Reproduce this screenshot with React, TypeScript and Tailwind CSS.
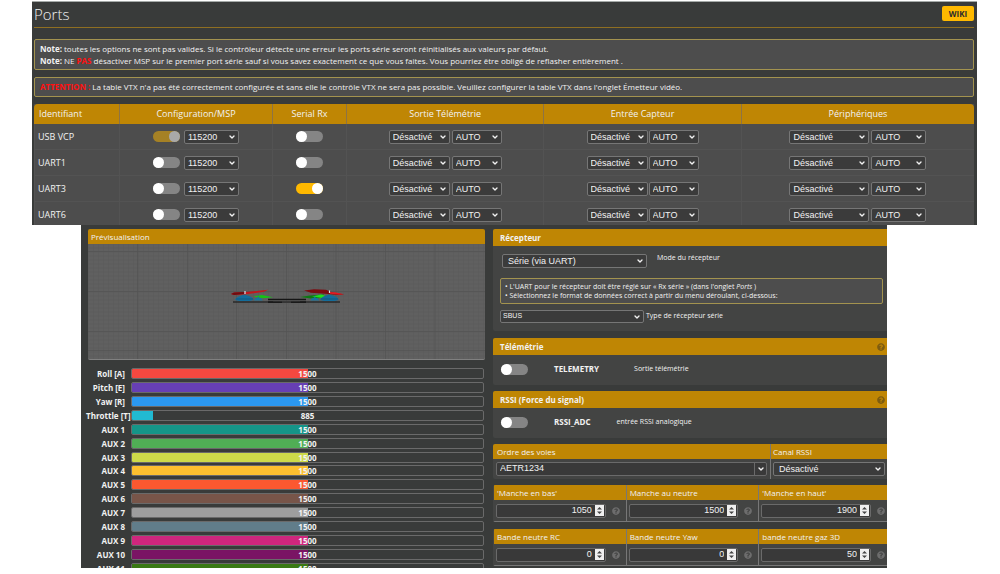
import type { ReactNode } from "react";
import { ChevronDown } from "lucide-react";
import { FaQuestionCircle } from "react-icons/fa";

interface SelectProps {
  label: string;
  options: string[];
  className: string;
}

function Select({ label, options, className }: SelectProps) {
  return (
    <span className="relative inline-flex items-center">
      <select
        aria-label={label}
        className={`appearance-none rounded-xs border border-[#767676] bg-[#3b3b3b] font-['Liberation_Sans',sans-serif] text-[9px] text-[#f2f2f2] outline-none ${className}`}
      >
        {options.map((o) => (
          <option key={o}>{o}</option>
        ))}
      </select>
      <ChevronDown className="pointer-events-none absolute right-[3px] size-2" strokeWidth={4} />
    </span>
  );
}

interface ToggleProps {
  label: string;
  id?: string;
  on?: boolean;
  disabled?: boolean;
}

function Toggle({ label, id, on, disabled }: ToggleProps) {
  return (
    <input
      type="checkbox"
      id={id}
      aria-label={label}
      defaultChecked={on}
      disabled={disabled}
      className="flex h-[11px] w-[27px] shrink-0 appearance-none rounded-full bg-[#858585] before:size-[11px] before:rounded-full before:bg-white checked:justify-end checked:bg-[#ffb900] disabled:bg-[#a58125] disabled:before:bg-[#a9a9a9]"
    />
  );
}

const ports = [
  { id: "USB VCP", msp: true, locked: true, rx: false },
  { id: "UART1", msp: false, locked: false, rx: false },
  { id: "UART3", msp: false, locked: false, rx: true },
  { id: "UART6", msp: false, locked: false, rx: false },
];

const columns = [
  { title: "Configuration/MSP", width: "w-[153px]" },
  { title: "Serial Rx", width: "w-[74px]" },
  { title: "Sortie Télémétrie", width: "w-[21%]" },
  { title: "Entrée Capteur", width: "w-[21%]" },
  { title: "Périphériques", width: "" },
];

function PortsTable() {
  return (
    <table className="w-full table-fixed border-separate border-spacing-0 bg-[#4d4d4d] text-[9px] leading-3">
      <thead>
        <tr className="h-5 bg-[#bf8604]">
          <th className="w-[85px] rounded-tl-sm pl-[5px] text-left font-normal">Identifiant</th>
          {columns.map((c) => (
            <th key={c.title} className={`border-l border-[#8d7345] font-normal last:rounded-tr-sm ${c.width}`}>
              {c.title}
            </th>
          ))}
        </tr>
      </thead>
      <tbody>
        {ports.map((p) => (
          <tr key={p.id} className="h-[26px] *:border-b *:border-l *:border-[#535353] *:p-0">
            <td>
              <span className="pl-[3px]">{p.id}</span>
            </td>
            <td>
              <div className="flex items-center justify-center gap-1">
                <Toggle label={`MSP ${p.id}`} on={p.msp} disabled={p.locked} />
                <Select label={`Vitesse ${p.id}`} options={["115200"]} className="h-3.5 w-[55px] pl-[3px]" />
              </div>
            </td>
            <td>
              <div className="flex justify-center">
                <Toggle label={`Serial Rx ${p.id}`} on={p.rx} />
              </div>
            </td>
            <td>
              <div className="flex justify-center gap-0.5">
                <Select label={`Télémétrie ${p.id}`} options={["Désactivé"]} className="h-3.5 w-[61px] pl-[3px]" />
                <Select label={`Vitesse télémétrie ${p.id}`} options={["AUTO"]} className="h-3.5 w-[50px] pl-[3px]" />
              </div>
            </td>
            <td>
              <div className="flex justify-center gap-px">
                <Select label={`Capteur ${p.id}`} options={["Désactivé"]} className="h-3.5 w-[61px] pl-[3px]" />
                <Select label={`Vitesse capteur ${p.id}`} options={["AUTO"]} className="h-3.5 w-[50px] pl-[3px]" />
              </div>
            </td>
            <td>
              <div className="flex justify-center gap-0.5">
                <Select label={`Périphérique ${p.id}`} options={["Désactivé"]} className="h-3.5 w-[80px] pl-[3px]" />
                <Select label={`Vitesse périphérique ${p.id}`} options={["AUTO"]} className="h-3.5 w-[55px] pl-[3px]" />
              </div>
            </td>
          </tr>
        ))}
      </tbody>
    </table>
  );
}

const channels = [
  { name: "Roll [A]", value: 1500, fill: 50, color: "bg-[#f44840]" },
  { name: "Pitch [E]", value: 1500, fill: 50, color: "bg-[#673fb4]" },
  { name: "Yaw [R]", value: 1500, fill: 50, color: "bg-[#2b98f0]" },
  { name: "Throttle [T]", value: 885, fill: 6, color: "bg-[#21bad2]" },
  { name: "AUX 1", value: 1500, fill: 50, color: "bg-[#159588]" },
  { name: "AUX 2", value: 1500, fill: 50, color: "bg-[#50ae55]" },
  { name: "AUX 3", value: 1500, fill: 50, color: "bg-[#cdda49]" },
  { name: "AUX 4", value: 1500, fill: 50, color: "bg-[#fdc02f]" },
  { name: "AUX 5", value: 1500, fill: 50, color: "bg-[#fc5830]" },
  { name: "AUX 6", value: 1500, fill: 50, color: "bg-[#785549]" },
  { name: "AUX 7", value: 1500, fill: 50, color: "bg-[#9e9e9e]" },
  { name: "AUX 8", value: 1500, fill: 50, color: "bg-[#617d8a]" },
  { name: "AUX 9", value: 1500, fill: 50, color: "bg-[#cf267d]" },
  { name: "AUX 10", value: 1500, fill: 50, color: "bg-[#7a1464]" },
  { name: "AUX 11", value: 1500, fill: 50, color: "bg-[#3a7a14]" },
];

function ChannelBars() {
  return (
    <div className="mt-[7px] -ml-0.5 grid h-52 shrink-0 auto-rows-fr pr-px text-[8px] leading-[11px] font-bold">
      {channels.map((c) => (
        <div key={c.name} className="flex items-center gap-1.5">
          <span className="w-[39px] shrink-0 text-right whitespace-nowrap">{c.name}</span>
          <div className="grid h-[11px] flex-1 overflow-hidden rounded-xs border border-[#6a6a6a]">
            <div className={`col-start-1 row-start-1 ${c.color}`} style={{ width: `${c.fill}%` }} />
            <span className="col-start-1 row-start-1 text-center leading-[9px]">{c.value}</span>
          </div>
        </div>
      ))}
    </div>
  );
}

function ModelPreview() {
  return (
    <svg viewBox="0 0 397 116" preserveAspectRatio="xMidYMid slice" className="h-[116px] w-full rounded-b-xs border-b border-[#808080] bg-[#606060]">
      <defs>
        <pattern id="minor" width="5" height="4" patternUnits="userSpaceOnUse">
          <path d="M0 .5H5M.5 0V4" stroke="#5b5b5b" strokeWidth=".6" />
        </pattern>
      </defs>
      <rect width="397" height="116" fill="url(#minor)" />
      <path d="M49.5 0v116M99.5 0v116M148.500 0v116M198.500 0v116M248 0v116M297.500 0v116M347 0v116M0 8h397M0 48h397M0 88h397M0 107h397" stroke="#535353" strokeWidth=".7" />
      <path d="M145 58.500h40M212 58.500h40" stroke="#2a2a2a" strokeWidth="1.400" />
      <path d="M180 56h38" stroke="#151515" strokeWidth="1.500" />
      <path d="M180 58.600h38" stroke="#1a1a1a" strokeWidth="1.600" />
      <path d="M194 58.600h9" stroke="#555" strokeWidth=".8" />
      <path d="M165 53l9-1.500 11 2.200-10 1.100z" fill="#16c216" />
      <path d="M212 53.500l10-1.500 14-1-3 3.500-10 .5z" fill="#0d7a12" />
      <path d="M224 53l9-2 4 1-3 2.500z" fill="#1fe01f" />
      <path d="M166 57l1-2 2.500-.8.800-2 .8 2 2.500.8 1 2z" fill="#17759b" />
      <path d="M222.500 57l1-2 2.500-.8.800-2 .8 2 2.500.8 1 2z" fill="#17759b" />
      <path d="M147 56.500q1-3 5-4l4-1.500 5 1.500q4 1 4.500 4l-4 1h-10z" fill="#146d9b" />
      <path d="M232 56.500q1-3 5-4l4-1.500 5 1.500q4 1 4.500 4l-4 1h-10z" fill="#146d9b" />
      <path d="M148 55.500h17M233 55.500h17" stroke="#0d4260" strokeWidth=".5" />
      <path d="M143 50.500l3-1.500 12-.5 22-2.200-4 2-18 2.500-12 .7z" fill="#c4161c" />
      <path d="M143 50.500l3-1.500 11-.5-1 2-10 1z" fill="#6d0d10" />
      <path d="M216 47l10-1.200 12 .5 7 3 11 1.500-6 .7-13-1.200-14-1z" fill="#7c0b10" />
      <path d="M241 48.500l6 .2 9 2.100-5 .5-9-1.100z" fill="#e21a20" />
      <path d="M157 47.500v3M241.500 47v2.500" stroke="#d9e6ee" strokeWidth="1.200" />
    </svg>
  );
}

interface PanelProps {
  title: string;
  help?: boolean;
  children: ReactNode;
}

function Panel({ title, help, children }: PanelProps) {
  return (
    <section className="overflow-hidden rounded-l-xs bg-[#434443]">
      <header className="flex h-[17px] items-center justify-between bg-[#bf8604] pr-0.5 pl-[7px]">
        <h2 className="text-[8px] font-bold">{title}</h2>
        {help && <FaQuestionCircle className="size-2 text-[#7d5c10]" />}
      </header>
      {children}
    </section>
  );
}

interface FeatureProps {
  id: string;
  text: string;
  gap: string;
}

function Feature({ id, text, gap }: FeatureProps) {
  return (
    <div className={`flex h-[30px] items-center pb-0.5 pl-2 ${gap}`}>
      <Toggle label={text} id={id} />
      <label htmlFor={id} className="ml-[26px] text-[8px] font-bold">
        {id}
      </label>
      <span className="text-[7px]">{text}</span>
    </div>
  );
}

interface NumberFieldProps {
  title: string;
  value: number;
}

function NumberField({ title, value }: NumberFieldProps) {
  return (
    <label className="min-w-0 border-b border-l border-[#777] text-[8px] first:border-l-transparent">
      <span className="flex h-[15px] items-center bg-[#bf8604] pl-[3px]">{title}</span>
      <span className="flex h-[21px] items-center gap-1.5 pr-1.5 pl-0.5">
        <span className="flex h-3.5 min-w-0 flex-1 items-center rounded-xs border border-[#6a6a6a] bg-[#393939] pr-px">
          <input
            type="number"
            defaultValue={value}
            className="w-full min-w-0 [appearance:textfield] bg-transparent pr-[3px] text-right font-['Liberation_Sans',sans-serif] text-[9px] outline-none [&::-webkit-inner-spin-button]:appearance-none"
          />
          <svg viewBox="0 0 9 11" className="h-[11px] w-[9px] shrink-0">
            <path d="M0 0h9v11H0z" fill="#efefef" />
            <path d="M4.500 2l2.500 2.500h-5zM4.500 9l2.500-2.500h-5z" fill="#444" />
          </svg>
        </span>
        <FaQuestionCircle className="size-2 shrink-0 text-[#6d6d6d]" />
      </span>
    </label>
  );
}

const sticks = [
  { title: "'Manche en bas'", value: 1050 },
  { title: "Manche au neutre", value: 1500 },
  { title: "'Manche en haut'", value: 1900 },
];

const deadbands = [
  { title: "Bande neutre RC", value: 0 },
  { title: "Bande neutre Yaw", value: 0 },
  { title: "bande neutre gaz 3D", value: 50 },
];

function Receiver() {
  return (
    <div className="flex min-w-0 flex-col">
      <Panel title="Récepteur">
        <div className="h-[85px] pt-2 pr-1 pl-[7px] text-[7px]">
          <div className="flex items-start gap-2.5 pl-0.5">
            <Select label="Mode du récepteur" options={["Série (via UART)"]} className="h-3.5 w-[145px] pl-[5px]" />
            <span className="leading-[7px]">Mode du récepteur</span>
          </div>
          <ul className="mt-2.5 rounded-xs border border-[#a3934f] bg-[#4d4d4d] px-1 py-[3px] leading-[9px]">
            <li>
              • L'UART pour le récepteur doit être réglé sur « Rx série » (dans l'onglet <i>Ports</i> )
            </li>
            <li>• Sélectionnez le format de données correct à partir du menu déroulant, ci-dessous:</li>
          </ul>
          <div className="mt-1.5 flex items-center gap-0.5">
            <Select label="Type de récepteur série" options={["SBUS"]} className="h-[13px] w-36 pl-0.5 !text-[7px]" />
            <span>Type de récepteur série</span>
          </div>
        </div>
      </Panel>
      <div className="mt-[7px]">
        <Panel title="Télémétrie" help>
          <Feature id="TELEMETRY" text="Sortie télémétrie" gap="*:last:ml-[35px]" />
        </Panel>
      </div>
      <div className="mt-1.5">
        <Panel title="RSSI (Force du signal)" help>
          <Feature id="RSSI_ADC" text="entrée RSSI analogique" gap="*:last:ml-[26px]" />
        </Panel>
      </div>
      <div className="mt-1.5 grid grid-cols-[277fr_117fr] overflow-hidden rounded-l-xs bg-[#434443] text-[8px]">
        <label>
          <span className="flex h-[15px] items-center bg-[#bf8604] pl-1">Ordre des voies</span>
          <span className="flex h-5 items-center px-[3px]">
            <span className="flex h-3.5 flex-1 items-center rounded-xs border border-[#6a6a6a] bg-[#393939]">
              <input
                type="text"
                defaultValue="AETR1234"
                className="min-w-0 flex-1 bg-transparent pl-[3px] font-['Liberation_Sans',sans-serif] text-[9px] outline-none"
              />
              <span className="flex h-full w-3 items-center justify-center border-l border-[#6a6a6a]">
                <ChevronDown className="size-2" strokeWidth={4} />
              </span>
            </span>
          </span>
        </label>
        <div className="border-l border-[#777]">
          <span className="flex h-[15px] items-center bg-[#bf8604] pl-0.5">Canal RSSI</span>
          <span className="flex h-5 items-center px-0.5 *:w-full">
            <Select label="Canal RSSI" options={["Désactivé"]} className="h-3.5 w-full pl-[5px]" />
          </span>
        </div>
      </div>
      <div className="mt-1.5 -mr-1 grid grid-cols-3 overflow-hidden rounded-l-xs bg-[#434443]">
        {sticks.map((f) => (
          <NumberField key={f.title} {...f} />
        ))}
      </div>
      <div className="mt-[7px] -mr-1 grid grid-cols-3 overflow-hidden rounded-l-xs bg-[#434443]">
        {deadbands.map((f) => (
          <NumberField key={f.title} {...f} />
        ))}
      </div>
    </div>
  );
}

export default function App() {
  return (
    <main className="flex h-screen flex-col overflow-hidden bg-white pt-px pb-1.5 font-['Open_Sans',sans-serif] text-[#f2f2f2]">
      <section className="mr-[23px] ml-8 h-56 shrink-0 overflow-hidden border-t border-[#a5aaa8] bg-[#393b3a] pr-[3px] pl-0.5">
        <header className="flex h-[26px] items-center justify-between border-b border-[#8f6f22]">
          <h1 className="text-[15px] font-light">Ports</h1>
          <button className="mb-0.5 h-[15px] w-8 rounded-xs bg-[#ffb900] text-[8px] font-bold text-[#2b2b2b]">WIKI</button>
        </header>
        <div className="mt-[11px] rounded-xs border border-[#a3934f] bg-[#4d4d4d] px-[5px] pt-[3px] pb-0.5 text-[8px] leading-3">
          <p>
            <b>Note:</b> toutes les options ne sont pas valides. Si le contrôleur détecte une erreur les ports série seront réinitialisés aux valeurs par défaut.
          </p>
          <p>
            <b>Note:</b> NE <b className="text-[#ff1010]">PAS</b> désactiver MSP sur le premier port série sauf si vous savez exactement ce que vous faites. Vous pourriez être obligé de reflasher entièrement .
          </p>
        </div>
        <div className="my-[7px] rounded-xs border border-[#a3934f] bg-[#4d4d4d] px-[5px] py-[3px] text-[8px] leading-3">
          <p>
            <b className="text-[#ff1010]">ATTENTION :</b> La table VTX n'a pas été correctement configurée et sans elle le contrôle VTX ne sera pas possible. Veuillez configurer la table VTX dans l'onglet Émetteur vidéo.
          </p>
        </div>
        <PortsTable />
      </section>
      <section className="mr-[113px] ml-[81px] grid min-h-0 flex-1 grid-cols-[397fr_394fr] gap-2 overflow-hidden bg-[#393b3a] pt-1 pl-[7px]">
        <div className="flex min-w-0 flex-col">
          <h2 className="flex h-[15px] shrink-0 items-center rounded-t-xs bg-[#bf8604] pl-[3px] text-[8px]">Prévisualisation</h2>
          <div className="shrink-0">
            <ModelPreview />
          </div>
          <ChannelBars />
        </div>
        <Receiver />
      </section>
    </main>
  );
}
